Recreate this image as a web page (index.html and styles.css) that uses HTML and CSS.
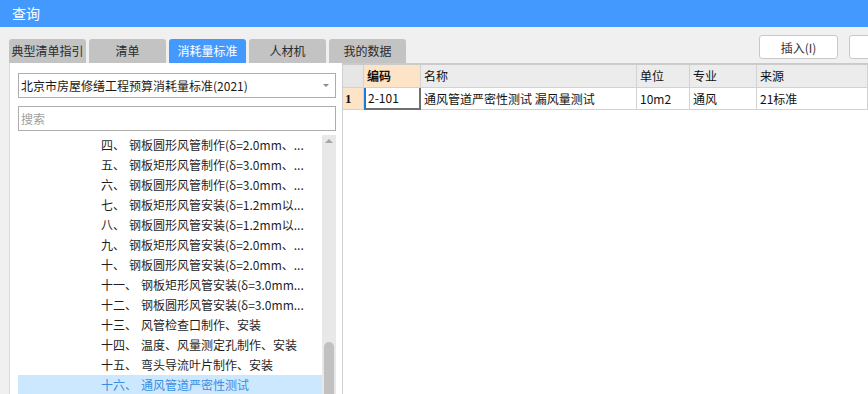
FILE: index.html
```html
<!DOCTYPE html>
<html lang="zh-CN">
<head>
<meta charset="utf-8">
<title>查询</title>
<link rel="stylesheet" href="styles.css">
</head>
<body>
<div class="window">
  <div class="titlebar">查询</div>
  <div class="toolbar">
    <div class="tabs">
      <div class="tab">典型清单指引</div>
      <div class="tab">清单</div>
      <div class="tab active">消耗量标准</div>
      <div class="tab">人材机</div>
      <div class="tab">我的数据</div>
    </div>
    <div class="buttons">
      <button class="btn">插入(I)</button>
      <button class="btn" aria-label="替换"></button>
    </div>
  </div>
  <div class="main">
    <div class="left">
      <div class="select">
        <span class="select-text">北京市房屋修缮工程预算消耗量标准(2021)</span>
        <span class="caret"></span>
      </div>
      <div class="search">搜索</div>
      <div class="tree">
        <div class="rows">
          <div class="row"><span class="num">四、</span>钢板圆形风管制作(δ=2.0mm、...</div>
          <div class="row"><span class="num">五、</span>钢板矩形风管制作(δ=3.0mm、...</div>
          <div class="row"><span class="num">六、</span>钢板圆形风管制作(δ=3.0mm、...</div>
          <div class="row"><span class="num">七、</span>钢板矩形风管安装(δ=1.2mm以...</div>
          <div class="row"><span class="num">八、</span>钢板圆形风管安装(δ=1.2mm以...</div>
          <div class="row"><span class="num">九、</span>钢板矩形风管安装(δ=2.0mm、...</div>
          <div class="row"><span class="num">十、</span>钢板圆形风管安装(δ=2.0mm、...</div>
          <div class="row"><span class="num">十一、</span>钢板矩形风管安装(δ=3.0mm...</div>
          <div class="row"><span class="num">十二、</span>钢板圆形风管安装(δ=3.0mm...</div>
          <div class="row"><span class="num">十三、</span>风管检查口制作、安装</div>
          <div class="row"><span class="num">十四、</span>温度、风量测定孔制作、安装</div>
          <div class="row"><span class="num">十五、</span>弯头导流叶片制作、安装</div>
          <div class="row selected"><span class="num">十六、</span>通风管道严密性测试</div>
        </div>
        <div class="scrollbar">
          <span class="arrow"></span>
          <span class="thumb"></span>
        </div>
      </div>
    </div>
    <div class="grid">
      <div class="cell hd rn"></div>
      <div class="cell hd cur">编码</div>
      <div class="cell hd">名称</div>
      <div class="cell hd">单位</div>
      <div class="cell hd">专业</div>
      <div class="cell hd">来源</div>
      <div class="cell rn num1">1</div>
      <div class="cell edit">2-101</div>
      <div class="cell">通风管道严密性测试 漏风量测试</div>
      <div class="cell">10m2</div>
      <div class="cell">通风</div>
      <div class="cell">21标准</div>
    </div>
  </div>
</div>
</body>
</html>
```

FILE: styles.css
```css
* { box-sizing: border-box; }

html, body {
  margin: 0;
  padding: 0;
  width: 868px;
  height: 394px;
  overflow: hidden;
  background: #f0f0f0;
  font-family: "Noto Sans CJK SC", "Noto Sans", sans-serif;
  font-size: 12px;
  color: #222;
}

.window {
  display: flex;
  flex-direction: column;
  height: 394px;
}

.titlebar {
  height: 27px;
  line-height: 26px;
  padding-left: 12px;
  background: #4499ff;
  color: #fff;
  font-size: 14px;
  flex: none;
}

.toolbar {
  height: 36px;
  display: flex;
  align-items: flex-start;
  flex: none;
}

.tabs {
  display: flex;
  gap: 3px;
  margin-left: 9px;
  margin-top: 12px;
}

.tab {
  width: 77px;
  height: 24px;
  line-height: 24px;
  text-align: center;
  background: #c3c3c3;
  color: #2a2a2a;
  border-radius: 3px 3px 0 0;
  font-size: 12px;
  white-space: nowrap;
  overflow: hidden;
}

.tab.active {
  background: #4499ff;
  color: #fff;
}

.buttons {
  display: flex;
  gap: 11px;
  margin-left: 353px;
  margin-top: 8px;
  flex: none;
}

.btn {
  width: 79px;
  height: 24px;
  padding: 0;
  background: #fff;
  border: 1px solid #c9c9c9;
  border-radius: 3px;
  font-family: "Noto Sans CJK SC", "Noto Sans", sans-serif;
  font-size: 12px;
  color: #333;
  flex: none;
}

.main {
  flex: 1;
  display: flex;
  min-height: 0;
}

.left {
  margin-left: 9px;
  width: 334px;
  flex: none;
  background: #fff;
  border-left: 1px solid #dadada;
  border-right: 1px solid #cfcfcf;
  padding: 10px 6px 0 8px;
  display: flex;
  flex-direction: column;
}

.select {
  height: 25px;
  border: 1px solid #adadad;
  display: flex;
  align-items: center;
  padding-left: 2px;
  padding-right: 6px;
  flex: none;
}

.select-text {
  flex: 1;
  font-size: 12px;
  color: #1a1a1a;
  white-space: nowrap;
}

.caret {
  width: 0;
  height: 0;
  border-left: 3px solid transparent;
  border-right: 3px solid transparent;
  border-top: 3px solid #8a8a8a;
}

.search {
  margin-top: 8px;
  height: 25px;
  line-height: 23px;
  border: 1px solid #adadad;
  padding-left: 2px;
  color: #a0a0a0;
  flex: none;
}

.tree {
  margin-top: 4px;
  flex: 1;
  display: flex;
  min-height: 0;
  overflow: hidden;
}

.rows {
  flex: 1;
}

.row {
  height: 20px;
  line-height: 20px;
  padding-left: 83px;
  white-space: nowrap;
  color: #1f1f1f;
}

.row .num {
  margin-right: 4px;
}

.row.selected {
  background: #cce8ff;
  color: #3b8de2;
}

.scrollbar {
  width: 14px;
  flex: none;
  background: #e8e8e8;
  display: flex;
  flex-direction: column;
  align-items: center;
}

.arrow {
  margin-top: 4px;
  width: 0;
  height: 0;
  border-left: 4px solid transparent;
  border-right: 4px solid transparent;
  border-bottom: 4px solid #a6a6a6;
}

.thumb {
  margin-top: 199px;
  width: 10px;
  flex: 1;
  background: #c1c1c1;
  border-radius: 5px 5px 0 0;
}

.grid {
  flex: 1;
  background: #fff;
  border-top: 2px solid #cbcbcb;
  display: grid;
  grid-template-columns: 21px 57px 216px 53px 67px 1fr;
  grid-template-rows: 23px 22px;
  align-content: start;
}

.cell {
  border-right: 1px solid #d2d2d2;
  border-bottom: 1px solid #d2d2d2;
  padding-left: 3px;
  line-height: 21px;
  white-space: nowrap;
  overflow: hidden;
  color: #111;
}

.cell.hd {
  background: #ececec;
  line-height: 22px;
}

.cell.hd.rn {
  background: #e6e6e6;
}

.cell.hd.cur {
  background: #fee4c6;
  font-weight: bold;
}

.cell.num1 {
  background: #fee4c6;
  font-family: "Liberation Serif", serif;
  font-weight: bold;
  font-size: 13px;
  padding-left: 2px;
}

.cell.edit {
  border-left: 2px solid #1a7be6;
  border-right: 2px solid #707070;
  border-bottom: 2px solid #707070;
  padding-left: 2px;
  line-height: 20px;
}
```
